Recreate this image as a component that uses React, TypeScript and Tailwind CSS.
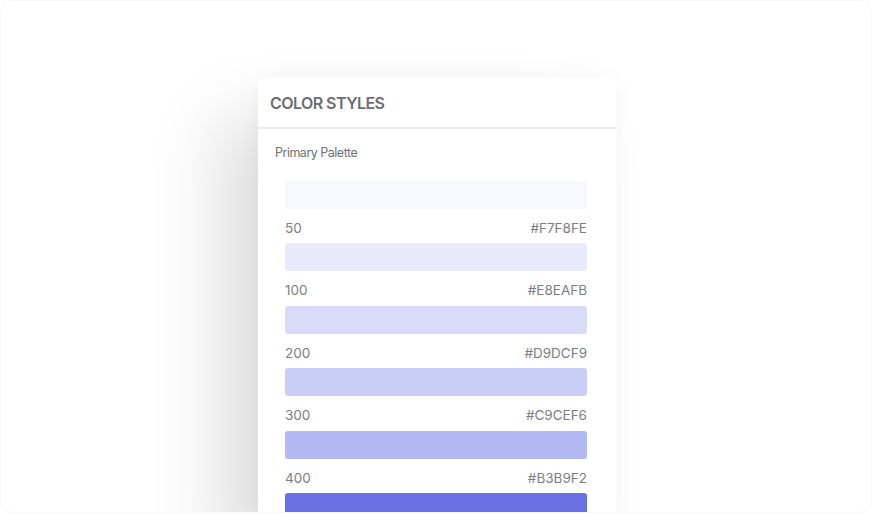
const swatches = [
  { name: '50', hex: '#F7F8FE', bg: 'bg-[#F7F8FE]' },
  { name: '100', hex: '#E8EAFB', bg: 'bg-[#E8EAFB]' },
  { name: '200', hex: '#D9DCF9', bg: 'bg-[#D9DCF9]' },
  { name: '300', hex: '#C9CEF6', bg: 'bg-[#C9CEF6]' },
  { name: '400', hex: '#B3B9F2', bg: 'bg-[#B3B9F2]' },
];

export default function App() {
  return (
    <div className="h-[514px] w-[872px] bg-white font-['Inter',sans-serif]">
      <div className="flex h-[513px] w-full overflow-hidden rounded-xl border border-[#f6f6f6] pl-[257px] pt-[76px]">
        <div className="w-[358px] shrink-0 self-start rounded-t-lg bg-white shadow-[-40px_40px_70px_rgba(0,0,0,0.13),0_0_24px_rgba(0,0,0,0.04)]">
          <div className="flex h-[52px] items-center border-b-2 border-[#ececee] px-3 pt-0.5">
            <h2 className="text-[16px] font-semibold tracking-[-0.035em] text-[#6b6e75]">COLOR STYLES</h2>
          </div>
          <div className="px-[17px] pt-[15px]">
            <p className="text-[12.5px] leading-[18px] tracking-[-0.04em] text-[#6f7177]">Primary Palette</p>
            <div className="mt-[19px] px-[10px] pr-[12px]">
              {swatches.map((s) => (
                <div key={s.name}>
                  <div className={`h-7 rounded-[3px] ${s.bg}`} />
                  <div className="mt-[10px] mb-[6.4px] flex justify-between text-[13.5px] leading-[18px] text-[#7c7e84]">
                    <span>{s.name}</span>
                    <span>{s.hex}</span>
                  </div>
                </div>
              ))}
              <div className="h-7 rounded-[3px] bg-[#6771E4]" />
            </div>
          </div>
        </div>
      </div>
    </div>
  );
}
